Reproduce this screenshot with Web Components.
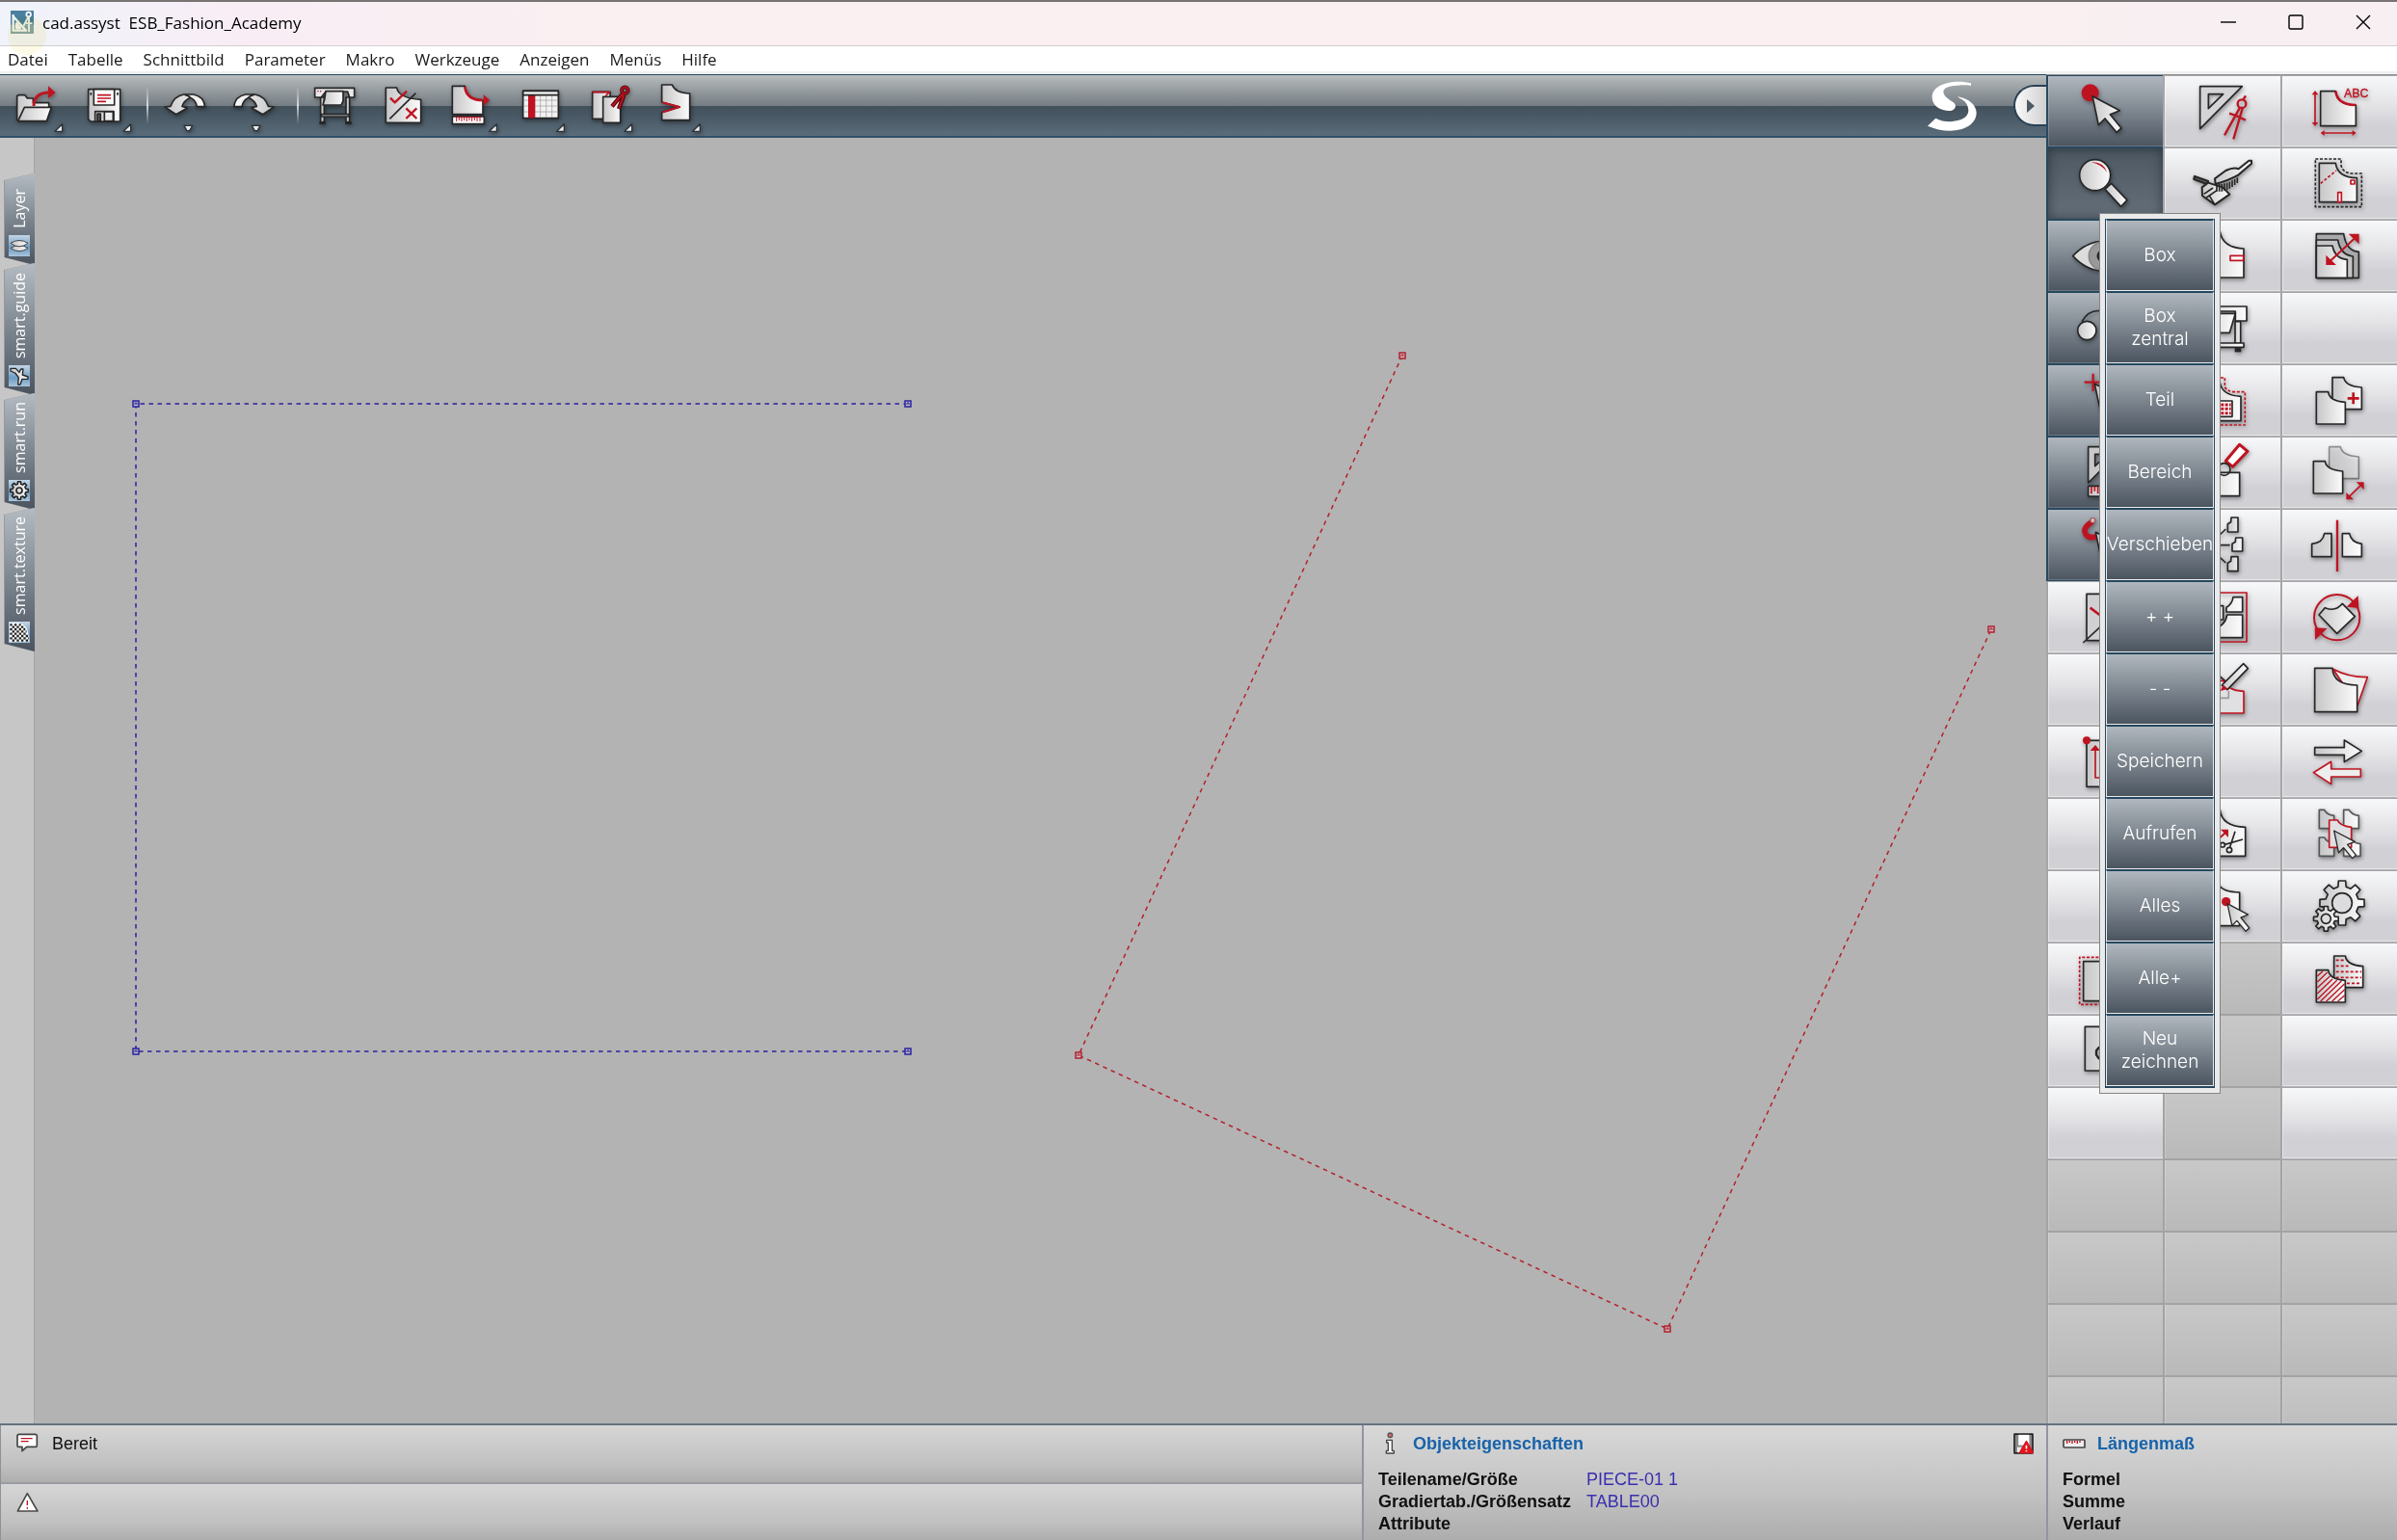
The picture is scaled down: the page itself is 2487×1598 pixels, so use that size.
<!DOCTYPE html>
<html lang="de">
<head>
<meta charset="utf-8">
<title>cad.assyst ESB_Fashion_Academy</title>
<style>
  html, body { margin: 0; height: 100%; }
  body { font-family: "Liberation Sans", Arial, sans-serif; font-size: 18px; color: #111; overflow: hidden; }
</style>
</head>
<body>
<cad-app></cad-app>
<script>
const RED = '#be1421';

/* ---------- icon drawings: [x0, y0, markup], drawn at three units per pixel ---------- */
const corner = x => `<path class="c" d="M${x} 409l23-23v23z"/>`;
const drop = x => `<path class="c" d="M${x - 13} 391h26l-9 16h-8z"/>`;
const pointer = (x, y, k = 1) => `<path transform="translate(${x} ${y}) scale(${k})" d="M0 0L85 45 55 57 90 100 75 113 39 70 19 90Z"/>`;
function gear(cx, cy, ro, ri, hole, n) {
  const pts = [];
  for (let i = 0; i < n; i++) {
    const a = i * 2 * Math.PI / n - Math.PI / 2, s = Math.PI / n;
    for (const [r, d] of [[ri, -.62], [ro, -.4], [ro, .4], [ri, .62]])
      pts.push((cx + r * Math.cos(a + d * s)).toFixed(1) + ' ' + (cy + r * Math.sin(a + d * s)).toFixed(1));
  }
  return `<path d="M${pts.join('L')}Z"/><circle cx="${cx}" cy="${cy}" r="${hole}" fill="#dcdcdf"/>`;
}
const undoShape = '<path d="M548 356L513 333 531 331Q541 300 572 294H602Q634 300 638 332H613Q610 312 592 304 572 314 567 331L583 336Z"/><path fill="none" d="M575 295Q588 297 592 304"/>';

const ICONS = {
  open: [3, 231, `<path d="M53 376V302Q53 296 59 296H78L85 306H103V320H152V336"/><path d="M76 334H160L145 377H56Z"/><path class="r" stroke-width="9" d="M105 330Q106 290 150 288"/><path class="rf" fill="#e30613" d="M150 268L173 288 150 307Z"/>${corner(171)}`],
  save: [216, 231, `<path d="M275 278H374V378H282L275 371Z"/><path fill="#fff" d="M292 278H356V327H292Z"/><path class="r" stroke-width="5" d="M303 296H345M303 306H345M303 316H330"/><path d="M296 347H354V378H296Z" fill="#d8d8d8"/><path fill="#555" d="M303 354H313V377H303Z"/><path fill="#eee" d="M325 348H352V377H325Z"/><path class="k" d="M283 288v8M366 288v8"/>${corner(384)}`],
  undo: [471, 231, undoShape + drop(586)],
  redo: [684, 231, `<g transform="translate(1366) scale(-1 1)">${undoShape}</g>${drop(797)}`],
  plot: [939, 231, `<path fill="#ccc" d="M998 303H1009V380H998ZM1077 303H1088V380H1077Z"/><path fill="#e8e8e8" d="M980 274H1103V303H1088L1082 285H1014L1000 303H980Z"/><path fill="#ccc" d="M1000 356H1086V363H1000Z"/><path class="k" stroke-width="8" d="M994 383H1014M1075 383H1095"/><path d="M1014 284H1068V314L1062 327H1005L1010 310Z"/><path class="r" stroke-width="4" d="M988 284h4M996 284h4"/>`],
  check: [1152, 231, `<g transform="translate(1080)"><path d="M121 273H155Q160 306 230 310V382H121Z"/><path class="r" stroke-width="7" d="M135 305L149 319 186 284M184 337L217 369M217 337L184 369"/><path class="k" stroke-width="5" d="M133 370L214 290"/></g>`],
  measure: [1365, 231, `<g transform="translate(1080)"><path d="M328 268H367Q370 310 423 312V356H328Z"/><path class="r" stroke-width="8" d="M367 270Q372 312 423 312"/><path class="rf" d="M425 294L444 312 425 330Z"/><path fill="#fff" d="M328 363H427V386H328Z"/><path class="r" stroke-width="3" d="M340 365H416M341 366v12M349 366v9M357 366v12M365 366v9M373 366v12M381 366v9M389 366v12M397 366v9M405 366v12M414 366v12"/>${corner(443)}</g>`],
  table: [1578, 231, `<g transform="translate(1080)"><path fill="#f2f2f2" d="M548 283H658V368H548Z"/><path stroke="#999" stroke-width="2" d="M550 312H656M550 330H656M550 348H656M602 298V366M620 298V366M638 298V366"/><path class="rf" d="M564 297H586V367H564Z"/><path d="M548 283H658V296H548Z" fill="#eee"/>${corner(653)}</g>`],
  pliers: [1791, 231, `<g transform="translate(1080)"><path d="M764 286H819V370H764Z"/><path class="r" d="M764 287H818L805 298"/><path d="M797 301H851V382H797Z"/><path fill="none" stroke="#53050b" stroke-width="13" d="M858 292L825 331M862 296L846 339"/><circle cx="865" cy="281" r="10" fill="none" stroke="#53050b" stroke-width="11"/><path class="r" stroke-width="6" d="M858 292L825 331M862 296L846 339"/><circle cx="865" cy="281" r="10" fill="none" stroke="${RED}" stroke-width="5"/>${corner(864)}</g>`],
  dart: [2004, 231, `<g transform="translate(1080)"><path d="M980 264H1012Q1022 290 1067 291V374H980V350L1036 333 980 318Z"/><path class="r" stroke-width="6" d="M981 319L1035 333 981 350"/>${corner(1076)}</g>`],

  select: [42, 23, `<circle class="rf" cx="176" cy="78" r="27"/>${pointer(183, 88)}`],
  construct: [407, 23, `<path fill="#d4d4d6" fill-rule="evenodd" d="M520 58H651L520 190ZM546 82V127L592 82Z"/><g class="r"><circle cx="650" cy="112" r="13" stroke-width="7"/><path d="M655 98L662 87M644 124L596 210M652 126L624 222M611 142Q635 148 662 163" stroke-width="7"/></g>`],
  label: [771, 23, `<path d="M893 73H940Q945 116 1003 116V181H893Z"/><path class="r" stroke-width="8" d="M940 73Q945 116 1003 116"/><path class="r" d="M876 78V176M900 203H998"/><path class="rf" d="M866 84L876 71 886 84ZM866 170L876 182 886 170ZM905 194L893 203 905 212ZM992 194L1004 203 992 212Z"/><text x="966" y="93">ABC</text>`],
  zoom: [42, 248, `<path d="M222 378L242 360 291 412 272 432Z"/><circle cx="191" cy="334" r="48"/><path class="rf" d="M180 294Q218 292 229 326Q214 302 180 294Z"/>`],
  brush: [407, 248, `<path fill="#666" stroke-width="7" d="M503 338L545 353 541 362 501 347Z"/><path stroke-width="6" d="M526 372L545 358 590 372 612 394 566 426 527 398Z"/><path fill="none" d="M532 393L560 374M540 404L572 382M566 426L550 400"/><path class="k" stroke-width="5" d="M572 362v23M580 362v23M588 362v23M596 360v22M604 358v22M612 355v21M620 351v20M628 347v18M636 342v17"/><path stroke-width="6" d="M566 345Q580 335 600 320Q625 308 640 315L672 289H680V298L640 333Q610 350 568 362Z"/>`],
  seam: [771, 248, `<path class="k" fill="none" stroke-dasharray="9 5" d="M877 284H957V302Q960 326 990 329H1021V433H877Z"/><path d="M889 297H940Q945 341 1006 343V418H889Z"/><path class="r" stroke-dasharray="9 6" stroke-width="5" d="M893 360L942 320"/><path class="r" fill="#fff" d="M987 350h12v12h-12zM947 388h11v30h-11z"/>`],
  eye: [42, 473, `<path fill="#dcdcdc" d="M122 586Q165 540 215 540T308 586Q265 632 215 632T122 586Z"/><circle cx="215" cy="586" r="43" fill="#999" stroke="#888"/><circle cx="215" cy="586" r="16" fill="#333"/>`],
  notch: [407, 473, `<path d="M500 510H582Q590 560 656 563V653H500Z"/><path class="r" fill="#fff" d="M614 585H655V600H614Z"/>`],
  grade: [771, 473, `<path fill="#a9a9ab" d="M880 517H965Q972 570 1012 573V654H880Z"/><path fill="#c5c5c7" d="M880 536H947Q955 583 994 587V654H880Z"/><path d="M880 554H930Q938 595 976 597V654H880Z"/><path class="r" stroke-width="6" d="M925 600L1000 530"/><path class="rf" d="M910 614V583L942 614ZM1013 517V549L980 517Z"/>`],
  glasses: [42, 698, `<path fill="none" d="M150 790Q172 752 208 757"/><circle cx="166" cy="818" r="29"/><circle cx="250" cy="818" r="29"/>`],
  plotter: [407, 698, `<path d="M500 743H665V788H630V758H500Z"/><path d="M500 765H630L612 825H500Z"/><path d="M629 790H646V858H629Z"/><path d="M500 857H656V870H500Z"/><path class="k" stroke-width="14" d="M628 878H648"/>`],

  cross: [42, 23, `<path class="r" stroke-width="7" d="M158 79H212M185 52V106"/>${pointer(190, 84)}`],
  fuse: [407, 23, `<path class="r" stroke-dasharray="9 5" d="M500 65H597V92Q600 106 625 109H660V212H500Z"/><path d="M500 80H582Q588 120 647 123V199H500Z"/><path d="M540 137H620V186H540Z" fill="#fff"/><path class="r" stroke-width="9" stroke-dasharray="9 4" d="M546 149H616M546 162H616M546 175H616"/>`],
  addPiece: [771, 23, `<path d="M930 64H965Q970 92 1021 95V163H930Z"/><path d="M880 109H917Q920 138 970 141V209H880Z"/><path class="r" stroke-width="8" d="M977 129H1013M995 111V147"/>`],
  square: [42, 248, `<path fill="#c8c8ca" fill-rule="evenodd" d="M170 280H282L170 392ZM191 303V340L230 303Z"/><path d="M170 402H282V434H170Z"/><path class="r" stroke-width="5" d="M180 404v22M190 404v14M200 404v22M210 404v14"/>`],
  tag: [407, 248, `<path d="M500 360H643V433H500Z"/><path class="r" fill="#fff" stroke-width="9" d="M643 273L668 294 622 342 600 324Z"/><circle cx="595" cy="350" r="19" fill="none"/>`],
  movePiece: [771, 248, `<path opacity=".45" d="M920 280H955Q960 308 1012 311V379H920Z"/><path d="M871 325H907Q910 352 962 356V425H871Z"/><path class="r" stroke-width="5" d="M982 435L1018 400"/><path class="rf" d="M973 444V422L996 444ZM1028 390V413L1004 390Z"/>`],
  magnet: [42, 473, `<path class="r" stroke="#c4040e" stroke-width="17" d="M184 512Q150 532 162 552Q174 570 205 555"/><circle cx="184" cy="509" r="8" fill="#d8b8b8" stroke="#944" stroke-width="3"/>${pointer(193, 546)}`],
  nest: [407, 473, `<path d="M617 500H638V545H606V520L616 514ZM631 563H652V605H620V582L630 576ZM617 622H638V667H606V642L616 636Z"/><path class="k" d="M575 560L600 536M575 586H613M575 618L600 641"/>`],
  mirror: [771, 473, `<path d="M905 550H927V622H866V582Q900 580 905 550ZM961 550H983Q988 578 1021 582V622H961Z"/><path class="r" stroke-width="7" d="M945 508V668"/>`],
  cut: [42, 698, `<path fill="#d0d0d2" d="M165 738H290V883H165Z"/><path class="r" stroke-width="8" d="M176 781L205 803"/><path class="k" d="M154 890L210 838"/>`],
  marker: [407, 698, `<path class="r" d="M500 734H665V887H500Z"/><path d="M602 794V780Q620 770 623 748H652V794ZM500 775H592V818H500ZM604 803H652V874H560V845Q598 840 604 803Z"/>`],
  rotate: [771, 698, `<circle class="r" stroke-width="6" cx="944" cy="811" r="71"/><path d="M907 781Q940 795 961 768L1000 808 944 861 888 803Z"/><path class="rf" d="M1010 743L1012 782 974 778ZM876 881L875 843 914 845Z"/>`],

  redraw: [407, 23, `<path class="k" fill="none" d="M500 95H582L605 115"/><path class="r" fill="#dcdcde" d="M500 108H592Q605 138 656 141V209H500Z"/><path fill="none" stroke="#999" d="M560 162H609V140"/><path d="M655 55L669 70 605 136 588 122Z"/><path class="rf" d="M583 140L592 121 606 134Z"/>`],
  skew: [771, 23, `<path class="r" fill="#eee" d="M932 72Q980 98 1039 97L1008 185Z"/><path d="M875 69H930Q932 122 1007 122V205H875Z"/>`],
  origin: [42, 248, `<path d="M165 294H300V438H165Z"/><path class="r" d="M192 320V410H240"/><path class="rf" d="M176 326L192 308 207 326Z"/><circle class="rf" cx="165" cy="294" r="12"/>`],
  swap: [771, 248, `<path d="M875 316H967V293L1021 327 967 361V339H875Z"/><path class="r" fill="#eee" d="M1018 383H926V360L871 394 926 430V407H1018Z"/>`],
  scissors: [407, 473, `<path d="M500 510H582Q588 562 661 564V654H500Z"/><path class="r" stroke-width="6" d="M580 598L600 580"/><path class="rf" d="M608 571V596L584 571Z"/><path class="k" d="M629 577L613 626M653 602L597 618"/><circle cx="590" cy="619" r="7" fill="#eee"/><circle cx="611" cy="635" r="8" fill="#eee"/>`],
  pickPiece: [771, 473, `<g stroke="#555"><path d="M889 510H905Q912 526 935 528V568H889ZM965 510H982Q990 526 1012 528V568H965ZM889 596H905Q912 612 935 614V654H889ZM965 596H982Q995 614 1017 616V654H965Z"/></g><path class="r" fill="#e4e4e6" d="M920 542H946Q952 560 989 564V627H920Z"/>${pointer(935, 575, .76)}`],
  pickPoint: [407, 698, `<path d="M500 745H580Q592 766 643 767V871H500Z"/><circle class="rf" cx="601" cy="796" r="14"/>${pointer(605, 802, .76)}`],
  gears: [771, 698, gear(960, 800, 70, 52, 31, 8) + gear(910, 849, 39, 28, 15, 8)],

  margin: [42, 23, `<path class="r" stroke-dasharray="9 5" d="M300 69H143V216H300"/><path d="M155 82H300V205H155Z"/>`],
  hatch: [771, 23, `<path d="M935 65H970Q975 94 1025 97V163H935Z"/><path class="r" stroke-dasharray="9 6" stroke-width="5" d="M941 78H968M941 96H985M941 114H1020M941 132H1020M975 150H1020"/><path d="M880 109H917Q920 138 970 141V209H880Z"/><path class="r" stroke-width="4" d="M883 128L900 112M883 146L914 116M883 164L922 128M883 182L930 137M883 200L944 141M893 206L958 143M911 206L968 151M929 206L968 169M947 206L968 187"/>`],
  piece: [42, 248, `<path d="M160 285H300V422H160Z"/><path stroke-width="7" fill="#aaa" d="M215 350H203L195 360V373L203 384H215Z"/>`],

  message: [0, 0, `<path fill="#fff" stroke="#444" stroke-width="5" d="M8 4H60Q64 4 64 9V38Q64 43 60 43H32L18 56V43H8Q3 43 3 38V9Q3 4 8 4Z"/><path class="r" stroke-width="4" d="M14 17H50M14 26H38"/>`, 69, 60],
  warning: [0, 0, `<path fill="#fff" stroke="#4a4a4a" stroke-width="5" d="M34 5L66 60H4Z"/><path class="r" stroke-width="4" d="M34 27V42M34 48v5"/>`, 69, 63],
  info: [0, 0, `<circle cx="16" cy="10" r="7" fill="#d66" stroke="#555" stroke-width="4"/><path fill="#fff" stroke="#444" stroke-width="4" d="M5 25H22V58H28V66H4V58H10V33H5Z"/>`, 33, 69],
  ruler: [0, 0, `<path fill="#eee" stroke="#444" stroke-width="5" d="M6 6H66Q69 6 69 9V30H6Q3 30 3 27V9Q3 6 6 6Z"/><path class="r" stroke-width="4" d="M14 9v9M22 9v6M30 9v9M38 9v6M46 9v9M54 9v6"/>`, 72, 36],
  disk: [0, 0, `<path fill="#888" stroke="#222" stroke-width="5" d="M3 3H61V63H3Z"/><path stroke="none" fill="#fff" d="M16 5H50V38H16Z"/><path stroke="none" fill="#eee" d="M12 44H26V61H12Z"/><path fill="#e2141e" stroke="#e2141e" d="M41 26L62 62H20Z"/><path stroke="#fff" stroke-width="5" d="M41 38V50M41 54v4"/>`, 64, 66],
  app: [0, 0, `<path stroke="none" fill="#4a7f9f" d="M0 0H72V72H0Z"/><path stroke="none" fill="#8aa5a6" d="M0 44H72V72H0Z"/><path fill="none" stroke="#f0f4f2" stroke-width="7" d="M8 12V62H48L8 18M18 40V54H30Z"/><circle cx="56" cy="12" r="7" fill="none" stroke="#fff" stroke-width="5"/><path fill="none" stroke="#e6ece8" stroke-width="6" d="M55 20L40 48M57 20V66M42 40H68"/>`, 72, 72],
  logo: [60, 248, `<path fill="#fff" stroke="none" d="M198 258C150 245 78 258 77 300C76 330 105 344 130 344C146 344 155 330 146 320C130 308 112 300 112 284C113 266 150 262 198 265ZM158 300C196 306 216 330 215 352C213 386 175 406 134 406C108 406 84 400 63 391L88 367C112 380 140 380 165 372C190 363 196 344 184 322C178 312 168 306 158 302Z"/>`, 159, 162],
  layers: [0, 0, `<path stroke-width="3" stroke="#444" d="M6 40Q33 24 60 40Q33 60 6 40Z"/><path stroke-width="3" stroke="#444" d="M6 25Q33 8 60 25Q33 46 6 25Z"/>`, 66, 66],
  guide: [0, 0, `<path stroke-width="4" d="M6 10H22L33 22 38 12H45L43 30 60 36V43H42L36 60H29L31 38 20 24 6 18Z"/>`, 66, 66],
  run: [0, 0, gear(33, 33, 28, 21, 9, 8), 66, 66],
  texture: [0, 0, `<path stroke="none" fill="#fff" d="M2 4H32Q60 10 62 44V62H2Z"/><path stroke="#222" fill="none" stroke-width="7" stroke-dasharray="7 7" d="M4 10H38M4 24H52M4 38H60M4 52H62"/><path stroke="#222" fill="none" stroke-width="7" stroke-dasharray="7 7" stroke-dashoffset="7" d="M4 17H46M4 31H56M4 45H60M4 59H62"/>`, 66, 66]
};

class CadIcon extends HTMLElement {
  connectedCallback() {
    const root = this.shadowRoot || this.attachShadow({ mode: 'open' });
    const kind = this.getAttribute('kind') || 'cell';
    const [x, y, art, w = kind === 'tool' ? 213 : 363, h = kind === 'tool' ? 198 : 225] = ICONS[this.getAttribute('name')];
    root.innerHTML = `<style>
      :host { display: block; flex: none; width: ${Math.round(w / 3)}px; height: ${Math.round(h / 3)}px; }
      svg { display: block; width: 100%; height: 100%; filter: ${w > 200 ? 'drop-shadow(1px 2px 2px rgba(0,0,0,.38))' : 'none'}; }
      path, circle { stroke-linejoin: round; }
      .art { fill: url(#metal); stroke: #262626; stroke-width: 5; }
      .r { stroke: ${RED}; fill: none; }
      .r[fill="#fff"] { fill: #fff; } .r[fill="#eee"] { fill: #eee; } .r[fill="#e4e4e6"], .r[fill="#dcdcde"] { fill: #e0e0e2; }
      .rf { fill: ${RED}; stroke: none; }
      .k { stroke: #262626; }
      .c { fill: #eee; stroke: #2a3238; stroke-width: 4; }
      text { fill: ${RED}; stroke: ${RED}; stroke-width: 1; font: 37px "Liberation Sans", Arial, sans-serif; }
    </style><svg viewBox="${x} ${y} ${w} ${h}" aria-hidden="true"><defs><linearGradient id="metal"><stop stop-color="#c6c6c8"/><stop offset="1" stop-color="#fcfcfc"/></linearGradient></defs><g class="art">${art}</g></svg>`;
  }
}

/* Small helper for elements whose markup is static */
const define = (name, html, setup) => customElements.define(name, class extends HTMLElement {
  connectedCallback() {
    if (this.shadowRoot) return;
    const root = this.attachShadow({ mode: 'open' });
    root.innerHTML = typeof html === 'function' ? html(this) : html;
    if (setup) setup(root, this);
  }
});
customElements.define('cad-icon', CadIcon);

define('title-bar', `<style>
  :host { display: flex; position: relative; box-sizing: border-box; height: 48px; padding-bottom: 3px; align-items: center; border-top: 2px solid #767372; border-bottom: 1px solid #d3cfd2;
    background: linear-gradient(90deg, #f0f3fa 0, #f2f2f9 70px, #f9edf5 260px, #f9eff3 420px, #faf0f1 700px, #faf0f1 84%, #f8eff2 90%); }
  cad-icon { margin-left: 11px; }
  h1 { flex: 1; margin: 0 0 0 9px; font: 17px "Open Sans", "Noto Sans", sans-serif; color: #000; white-space: pre; }
  .spot { position: absolute; left: 8px; top: 15px; width: 40px; height: 40px; border-radius: 50%; background: rgba(252,247,215,.6); z-index: 1; mix-blend-mode: multiply; }
  button { width: 70px; height: 42px; border: 0; background: none; padding: 0; display: grid; place-items: center; }
  svg { width: 16px; height: 16px; fill: none; stroke: #000; stroke-width: 1.4; }
</style><span class="spot"></span><cad-icon name="app"></cad-icon><h1><slot></slot></h1>
<button aria-label="Minimieren"><svg><path d="M0 8H16"/></svg></button>
<button aria-label="Maximieren"><svg><rect x="1" y="1" width="14" height="14" rx="1.5"/></svg></button>
<button aria-label="Schließen"><svg><path d="M1 1L15 15M15 1L1 15"/></svg></button>`);

define('menu-bar', `<style>
  :host { display: block; height: 29px; background: linear-gradient(#fff 26px, #f0f0f0 26px); }
  nav { display: flex; padding-left: 8px; gap: 21px; }
  button { border: 0; background: none; padding: 0; font: 17px/28px "Open Sans", "Noto Sans", sans-serif; color: #1a1a1a; }
</style><nav></nav>`, root => {
  root.querySelector('nav').innerHTML = ['Datei', 'Tabelle', 'Schnittbild', 'Parameter', 'Makro', 'Werkzeuge', 'Anzeigen', 'Menüs', 'Hilfe'].map(t => `<button>${t}</button>`).join('');
});

define('tool-bar', `<style>
  :host { display: flex; flex: none; box-sizing: border-box; height: 66px; padding-left: 1px; border-top: 1px solid #24475e; border-bottom: 2px solid #2f5068; align-items: flex-start;
    background: linear-gradient(#b9bdbf 0, #a6abae 8px, #747d83 32px, #42505a 32px, #4a5a66 44px, #5b6c7a 100%); }
  button { display: block; border: 0; padding: 0; background: none; width: 71px; height: 63px; flex: none; }
  button cad-icon { margin-top: -1px; }
  .sep { flex: none; width: 2px; height: 40px; margin: 11px 3px 0 9px; background: linear-gradient(transparent, #d5dade 50%, transparent); }
  .fill { flex: 1; }
  .logo { align-self: center; margin-right: 37px; }
  .fold { width: 34px; height: 43px; align-self: center; border: 2px solid #2a4254; border-right: 0; border-radius: 22px 0 0 22px; background: linear-gradient(90deg, #fafafa, #d0d0d2); display: grid; place-items: center; }
  .fold svg { width: 8px; height: 14px; fill: #4b5a66; }
</style>
<button aria-label="Öffnen"><cad-icon kind="tool" name="open"></cad-icon></button><button aria-label="Speichern"><cad-icon kind="tool" name="save"></cad-icon></button><span class="sep"></span>
<button aria-label="Rückgängig"><cad-icon kind="tool" name="undo"></cad-icon></button><button aria-label="Wiederholen"><cad-icon kind="tool" name="redo"></cad-icon></button><span class="sep"></span>
<button aria-label="Plotten"><cad-icon kind="tool" name="plot"></cad-icon></button><button aria-label="Prüfen"><cad-icon kind="tool" name="check"></cad-icon></button><button aria-label="Messen"><cad-icon kind="tool" name="measure"></cad-icon></button><button aria-label="Tabelle"><cad-icon kind="tool" name="table"></cad-icon></button><button aria-label="Werkzeug"><cad-icon kind="tool" name="pliers"></cad-icon></button><button aria-label="Abnäher"><cad-icon kind="tool" name="dart"></cad-icon></button>
<span class="fill"></span><cad-icon class="logo" name="logo"></cad-icon><button class="fold" aria-label="Einklappen"><svg viewBox="0 0 8 14"><path d="M0 0L8 7 0 14Z"/></svg></button>`);

define('side-tab', el => `<style>
  :host { display: block; filter: drop-shadow(-1px 0 0 #999); margin-left: 5px; }
  button { box-sizing: border-box; display: flex; flex-direction: column; align-items: center; justify-content: flex-end; width: 31px; height: ${el.getAttribute('length')}px; padding: 0 1px 9px 0; gap: 7px; border: 0; color: #fff;
    background: linear-gradient(#b4bbc2, #7d868f 50%, #4a535f); clip-path: polygon(0 7px, 100% 0, 100% 100%, 0 calc(100% - 8px)); }
  .t { writing-mode: vertical-rl; transform: rotate(180deg); font: 16px/22px "Open Sans", "Noto Sans", sans-serif; }
  cad-icon { background: linear-gradient(#c3d6e6, #6d9cc4 60%, #a9c4db); }
</style><button><span class="t"><slot></slot></span><cad-icon name="${el.getAttribute('icon')}"></cad-icon></button>`);

define('side-rail', `<style>
  :host { display: flex; flex-direction: column; flex: none; width: 36px; box-sizing: border-box; padding-top: 37px; background: linear-gradient(90deg, #c6c6c6 35px, #a4a4a4 35px); }
  side-tab + side-tab { margin-top: -2px; }
</style><side-tab icon="layers" length="95">Layer</side-tab><side-tab icon="guide" length="137">smart.guide</side-tab><side-tab icon="run" length="121">smart.run</side-tab><side-tab icon="texture" length="149">smart.texture</side-tab>`);

define('drawing-area', `<style>
  :host { display: block; flex: 1; min-width: 0; background: #b3b3b3; overflow: hidden; }
  svg { display: block; width: 100%; height: 100%; fill: none; stroke-width: 1.5; }
  .b { stroke: #2b22a0; } .d { stroke: #b3202c; } .l { stroke-dasharray: 4.5 4.5; }
</style><svg></svg>`, root => {
  const blue = [[906, 276], [105, 276], [105, 948], [906, 948]];
  const red = [[1419, 226], [1083, 952], [1694, 1236], [2030, 510]];
  const shape = (pts, c) => `<polyline class="${c} l" points="${pts.join(' ')}"/>` +
    pts.map(([x, y]) => `<path class="${c}" fill="#c4bcc4" d="M${x - 3} ${y - 3}h6v6h-6z"/><path class="${c}" stroke-width="1" d="M${x - 1} ${y + 1}v-2h2v2"/>`).join('');
  root.querySelector('svg').innerHTML = shape(blue, 'b') + shape(red, 'd');
});

define('zoom-menu', `<style>
  :host { display: block; box-sizing: border-box; width: 126px; padding: 5px; background: #eaeaea; border: 1px solid #858585; }
  .list { border: solid #24475e; border-width: 0 1px 2px; }
  button { display: flex; box-sizing: border-box; width: 100%; height: 75px; padding: 0; margin: 0; align-items: center; justify-content: center; text-align: center; border: solid rgba(255,255,255,.14); border-width: 2px 1px 1px; border-top-color: #24475e;
    color: #fff; font: 300 19px/24px Inter, "Liberation Sans", sans-serif; background: linear-gradient(#b0b7be, #4b5560) padding-box; }
  span { white-space: nowrap; }
</style><div class="list" role="menu"></div>`, root => {
  root.querySelector('.list').innerHTML = ['Box', 'Box<br>zentral', 'Teil', 'Bereich', 'Verschieben', '+ +', '- -', 'Speichern', 'Aufrufen', 'Alles', 'Alle+', 'Neu<br>zeichnen'].map(t => `<button role="menuitem"><span>${t}</span></button>`).join('');
});

define('tool-palette', `<style>
  :host { display: block; position: relative; flex: none; width: 364px; box-sizing: border-box; overflow: hidden; background: #bfbfc0; border-top: 1px solid #8f8f91; }
  .grid { display: grid; grid-template-columns: repeat(3, 1fr); grid-auto-rows: 75px; height: 100%; }
  .cell { display: block; box-sizing: border-box; min-width: 0; width: 100%; height: 75px; padding: 0; border: solid #a5a5a7; border-width: 1px 0 0 2px; background: linear-gradient(#f7f8fa, #e4e4e7 40%, #d1d0d5 72%, #d1d0d5) padding-box; box-shadow: inset 1px -1px rgba(255,255,255,.45); overflow: hidden; border-bottom: 1px solid #b4b4b6; }
  .cell cad-icon { margin: -1px 0 -1px -1px; }
  .dark { border-color: #28495f; background: linear-gradient(#b0b7be, #4b5560) padding-box; box-shadow: inset 1px -1px rgba(255,255,255,.18); }
  .down { background: linear-gradient(#4d5862, #646f79) padding-box; box-shadow: inset 0 0 12px rgba(20,30,40,.6); }
  .off { border-color: #a3a3a3; background: linear-gradient(#c8c8c8, #b9b9ba) padding-box; box-shadow: inset 1px 0 rgba(255,255,255,.2); }
  zoom-menu { position: absolute; left: 55px; top: 143px; }
</style><div class="grid"></div><zoom-menu></zoom-menu>`, root => {
  const rows = [
    ['select', 'construct', 'label'], ['zoom', 'brush', 'seam'], ['eye', 'notch', 'grade'], ['glasses', 'plotter', ''],
    ['cross', 'fuse', 'addPiece'], ['square', 'tag', 'movePiece'], ['magnet', 'nest', 'mirror'], ['cut', 'marker', 'rotate'],
    ['', 'redraw', 'skew'], ['origin', '', 'swap'], ['', 'scissors', 'pickPiece'], ['', 'pickPoint', 'gears'],
    ['margin', null, 'hatch'], ['piece', null, ''], ['', null, ''], [null, null, null], [null, null, null], [null, null, null], [null, null, null]
  ];
  root.querySelector('.grid').innerHTML = rows.map((row, r) => row.map((name, c) => {
    if (name === null) return '<span class="cell off"></span>';
    const cls = 'cell' + (c === 0 && r < 7 ? ' dark' : '') + (name === 'zoom' ? ' down' : '');
    return name ? `<button class="${cls}" aria-label="${name}"><cad-icon name="${name}"></cad-icon></button>` : `<span class="${cls}"></span>`;
  }).join('')).join('');
});

define('status-bar', `<style>
  :host { display: flex; flex: none; height: 121px; box-sizing: border-box; border-top: 2px solid #66727e; font: 18px/22px "Liberation Sans", Arial, sans-serif; }
  .log { flex: 1; display: flex; flex-direction: column; border-left: 1px solid #8a929c; }
  .line { flex: 1; display: flex; align-items: flex-start; gap: 14px; padding: 8px 16px; background: linear-gradient(#d6d6d6, #c0c0c0 70%, #aeaeae); }
  .line + .line { border-top: 2px solid #9a9aa2; }
  section { box-sizing: border-box; padding: 7px 15px; border-left: 2px solid #9494a0; background: linear-gradient(#d8d8d8, #c2c2c2 60%, #adadad); }
  .obj { width: 710px; } .len { width: 364px; }
  header { display: flex; align-items: center; height: 23px; margin-bottom: 15px; }
  h2 { flex: 1; margin: 0; font: bold 18px/22px "Liberation Sans", Arial, sans-serif; color: #1763ab; }
  dl { display: grid; grid-template-columns: 216px 1fr; grid-auto-rows: 23px; margin: 0; }
  dt { font-weight: bold; } dd { margin: 0; color: #3a2fae; }
  .obj header cad-icon:first-child { margin: 0 18px 0 7px; }
  .obj header cad-icon:last-child { margin-right: -2px; }
  .len header cad-icon { margin-right: 12px; }
</style>
<div class="log"><div class="line"><cad-icon name="message"></cad-icon><output>Bereit</output></div><div class="line"><cad-icon name="warning"></cad-icon></div></div>
<section class="obj"><header><cad-icon name="info"></cad-icon><h2>Objekteigenschaften</h2><cad-icon name="disk"></cad-icon></header>
<dl><dt>Teilename/Größe</dt><dd>PIECE-01 1</dd><dt>Gradiertab./Größensatz</dt><dd>TABLE00</dd><dt>Attribute</dt><dd></dd></dl></section>
<section class="len"><header><cad-icon name="ruler"></cad-icon><h2>Längenmaß</h2></header>
<dl><dt>Formel</dt><dd></dd><dt>Summe</dt><dd></dd><dt>Verlauf</dt><dd></dd></dl></section>`);

define('cad-app', `<style>
  :host { display: flex; flex-direction: column; height: 100vh; background: #b3b3b3; }
  main { flex: 1; display: flex; min-height: 0; }
  .work { flex: 1; min-width: 0; display: flex; flex-direction: column; }
  .sheet { flex: 1; display: flex; min-height: 0; }
</style><title-bar>cad.assyst  ESB_Fashion_Academy</title-bar><menu-bar></menu-bar>
<main><div class="work"><tool-bar></tool-bar><div class="sheet"><side-rail></side-rail><drawing-area></drawing-area></div></div><tool-palette></tool-palette></main>
<status-bar></status-bar>`);
</script>
</body>
</html>
